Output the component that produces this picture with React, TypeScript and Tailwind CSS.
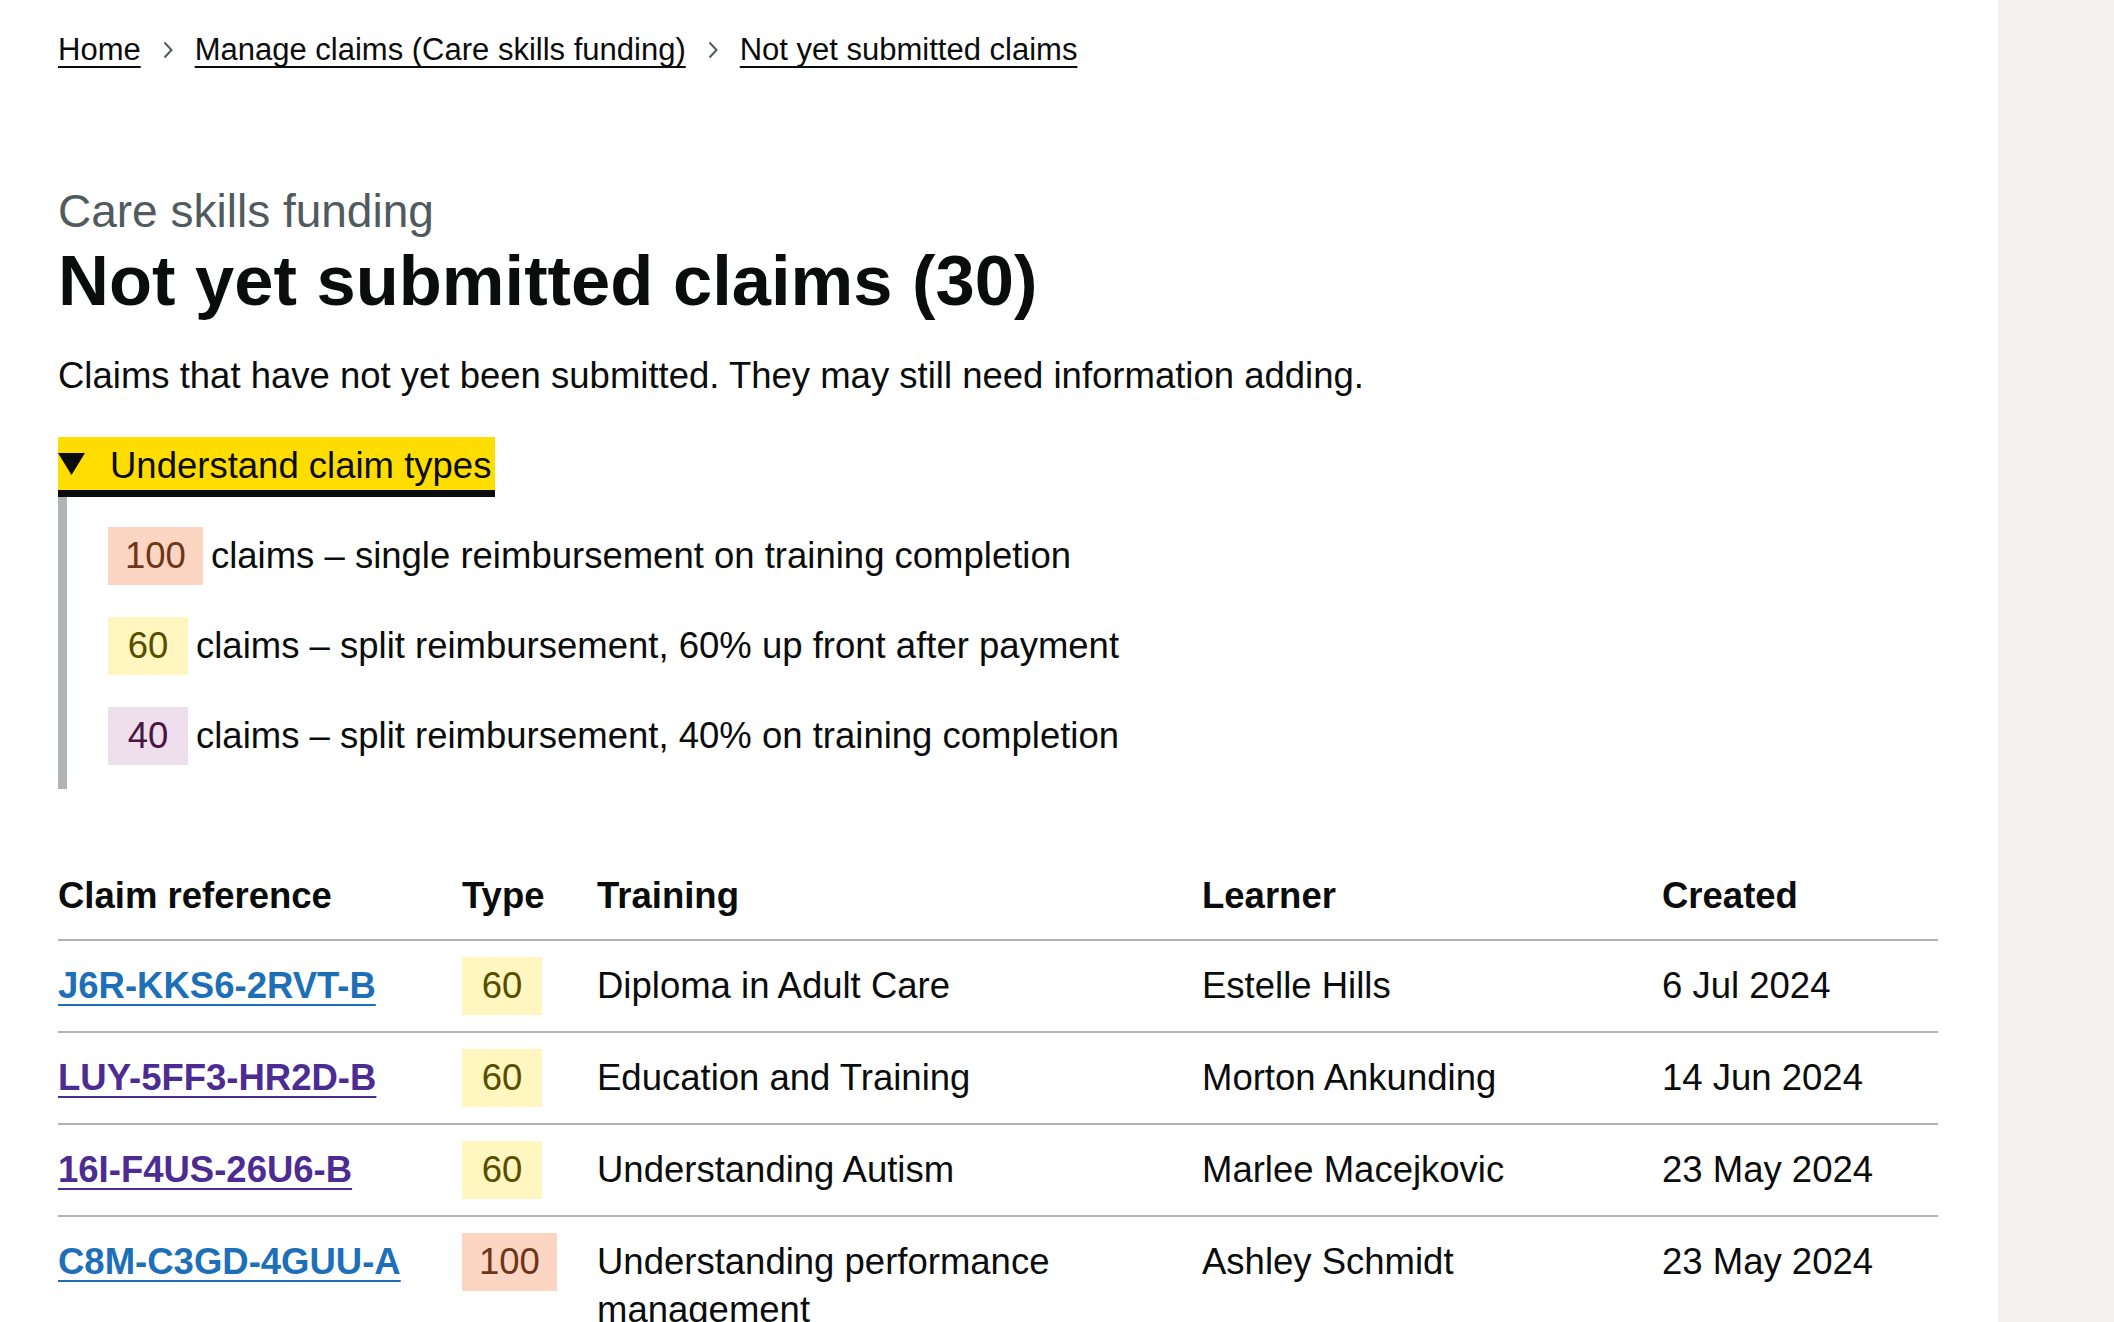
import React from "react";

type TagColor = "orange" | "yellow" | "purple";

const tagClasses: Record<TagColor, string> = {
  orange: "bg-[#fcd6c3] text-[#6e3619]",
  yellow: "bg-[#fff7bf] text-[#594d00]",
  purple: "bg-[#efdfed] text-[#491644]",
};

function Tag({ color, children }: { color: TagColor; children: React.ReactNode }) {
  return (
    <span
      className={`inline-flex h-[58px] min-w-[80px] shrink-0 items-center justify-center px-[17px] leading-none ${tagClasses[color]}`}
    >
      {children}
    </span>
  );
}

function Chevron() {
  return (
    <svg width="12" height="18" viewBox="0 0 12 18" className="mx-[21px] shrink-0" aria-hidden="true">
      <path d="M2.5 1.5 L9.5 9 L2.5 16.5" fill="none" stroke="#505a5f" strokeWidth="2" />
    </svg>
  );
}

const linkClass = "underline decoration-[2px] underline-offset-[6px]";

const rows: {
  ref: string;
  visited: boolean;
  type: TagColor;
  amount: string;
  training: string;
  learner: string;
  created: string;
}[] = [
  { ref: "J6R-KKS6-2RVT-B", visited: false, type: "yellow", amount: "60", training: "Diploma in Adult Care", learner: "Estelle Hills", created: "6 Jul 2024" },
  { ref: "LUY-5FF3-HR2D-B", visited: true, type: "yellow", amount: "60", training: "Education and Training", learner: "Morton Ankunding", created: "14 Jun 2024" },
  { ref: "16I-F4US-26U6-B", visited: true, type: "yellow", amount: "60", training: "Understanding Autism", learner: "Marlee Macejkovic", created: "23 May 2024" },
  { ref: "C8M-C3GD-4GUU-A", visited: false, type: "orange", amount: "100", training: "Understanding performance management", learner: "Ashley Schmidt", created: "23 May 2024" },
];

export default function App() {
  return (
    <div className="flex h-screen w-full overflow-hidden bg-white font-['Liberation_Sans',Arial,sans-serif] text-[#0b0c0c]">
      <main className="min-w-0 flex-1 pl-[58px] pr-[60px] pt-[31px]">
        {/* Breadcrumbs */}
        <nav aria-label="Breadcrumb">
          <ol className="flex h-[38px] items-center text-[31px] leading-[38px]">
            <li>
              <a href="#" className={linkClass}>Home</a>
            </li>
            <li className="flex items-center">
              <Chevron />
              <a href="#" className={linkClass}>Manage claims (Care skills funding)</a>
            </li>
            <li className="flex items-center">
              <Chevron />
              <a href="#" className={linkClass}>Not yet submitted claims</a>
            </li>
          </ol>
        </nav>

        {/* Heading */}
        <div className="mt-[113px]">
          <span className="block text-[46px] leading-[58px] text-[#505a5f]">Care skills funding</span>
          <h1 className="mt-[2px] text-[70.5px] font-bold leading-[77px]">Not yet submitted claims (30)</h1>
        </div>

        <p className="mt-[33px] text-[36.5px] leading-[48px]">
          Claims that have not yet been submitted. They may still need information adding.
        </p>

        {/* Details */}
        <div className="mt-[37px] text-[36.5px]">
          <div className="flex h-[60px] w-fit items-center border-b-[7px] border-[#0b0c0c] bg-[#ffdd00] pr-[4px]">
            <svg width="27" height="22" viewBox="0 0 27 22" aria-hidden="true" className="shrink-0">
              <polygon points="0,0 27,0 13.5,22" fill="#0b0c0c" />
            </svg>
            <span className="ml-[25px] pt-[5px] leading-[48px]">Understand claim types</span>
          </div>
          <div className="flex flex-col gap-[32px] border-l-[9px] border-[#b1b4b6] pb-[24px] pl-[41px] pt-[30px]">
            <div className="flex items-center">
              <Tag color="orange">100</Tag>
              <span className="ml-[8px] leading-[48px]">claims – single reimbursement on training completion</span>
            </div>
            <div className="flex items-center">
              <Tag color="yellow">60</Tag>
              <span className="ml-[8px] leading-[48px]">claims – split reimbursement, 60% up front after payment</span>
            </div>
            <div className="flex items-center">
              <Tag color="purple">40</Tag>
              <span className="ml-[8px] leading-[48px]">claims – split reimbursement, 40% on training completion</span>
            </div>
          </div>
        </div>

        {/* Table */}
        <table className="mt-[64px] w-full table-fixed border-collapse text-[36.5px]">
          <thead>
            <tr className="border-b-2 border-[#b1b4b6]">
              <th className="w-[404px] py-[19px] pr-[38px] text-left align-bottom font-bold leading-[48px]">Claim reference</th>
              <th className="w-[135px] py-[19px] pr-[20px] text-left align-bottom font-bold leading-[48px]">Type</th>
              <th className="w-[605px] py-[19px] pr-[38px] text-left align-bottom font-bold leading-[48px]">Training</th>
              <th className="w-[460px] py-[19px] pr-[38px] text-left align-bottom font-bold leading-[48px]">Learner</th>
              <th className="py-[19px] text-left align-bottom font-bold leading-[48px]">Created</th>
            </tr>
          </thead>
          <tbody>
            {rows.map((r) => (
              <tr key={r.ref} className="border-b-2 border-[#b1b4b6]">
                <td className="pb-[21px] pr-[38px] pt-[21px] align-top leading-[48px]">
                  <a
                    href="#"
                    className={`font-bold ${linkClass} ${r.visited ? "text-[#4c2c92]" : "text-[#1d70b8]"}`}
                  >
                    {r.ref}
                  </a>
                </td>
                <td className="py-[16px] pr-[20px] align-top">
                  <Tag color={r.type}>{r.amount}</Tag>
                </td>
                <td className="pb-[21px] pr-[38px] pt-[21px] align-top leading-[48px]">{r.training}</td>
                <td className="pb-[21px] pr-[38px] pt-[21px] align-top leading-[48px]">{r.learner}</td>
                <td className="pb-[21px] pt-[21px] align-top leading-[48px]">{r.created}</td>
              </tr>
            ))}
          </tbody>
        </table>
      </main>
      <aside className="h-full w-[116px] shrink-0 bg-[#f3f2f1]" />
    </div>
  );
}
